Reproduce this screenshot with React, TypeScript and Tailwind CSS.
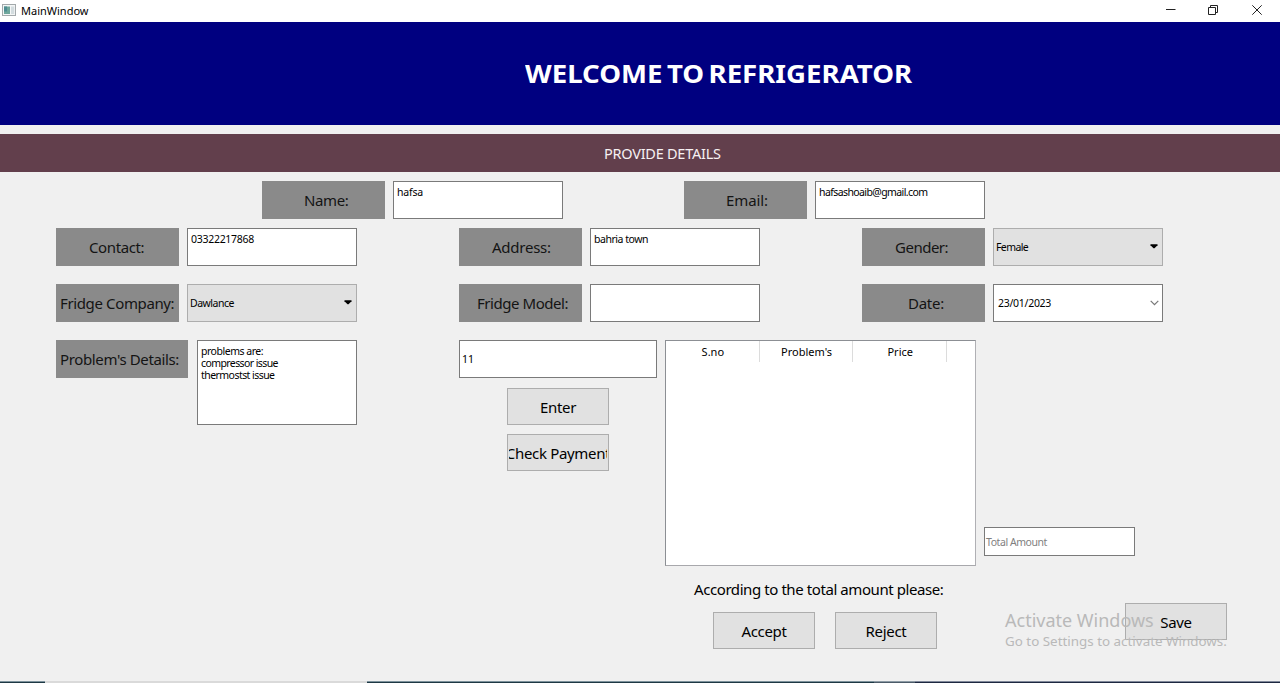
import React from "react";

function Label({ text, className }: { text: string; className: string }) {
  return (
    <div className={`flex h-[38px] shrink-0 items-center bg-[#8a8a8a] text-[15px] text-[#141414] ${className}`}>
      <span className="mt-px whitespace-nowrap">{text}</span>
    </div>
  );
}

function Field({ text, className }: { text: string; className: string }) {
  return (
    <div className={`h-[38px] w-[170px] shrink-0 border border-[#7a7a7a] bg-white px-[3px] py-1 text-[10.5px] leading-[12px] text-black ${className}`}>
      <span className="block whitespace-nowrap">{text}</span>
    </div>
  );
}

function Combo({ text, className }: { text: string; className: string }) {
  return (
    <div className={`flex h-[38px] w-[170px] shrink-0 items-center justify-between border border-[#adadad] bg-[#e1e1e1] pr-1 pl-[2px] text-[10.5px] text-black ${className}`}>
      <span className="mt-px whitespace-nowrap">{text}</span>
      <svg width="8" height="5" viewBox="0 0 8 5" className="mb-px">
        <path d="M0.5 0.3H7.5V1.2L4.5 4.3H3.5L0.5 1.2Z" fill="#000" />
      </svg>
    </div>
  );
}

function Button({ text, className }: { text: string; className?: string }) {
  return (
    <button className={`flex h-[37px] w-[102px] shrink-0 items-center border border-[#adadad] bg-[#e1e1e1] px-px text-[15px] tracking-[-0.32px] text-black ${className ?? ""}`}>
      <span className="mt-px flex w-full justify-center overflow-hidden whitespace-nowrap">{text}</span>
    </button>
  );
}

function TitleBar() {
  return (
    <header className="flex h-[22px] shrink-0 items-center bg-white pl-[2px]">
      <svg width="14" height="12" viewBox="0 0 14 12" className="-mt-[3px]">
        <rect x="0.5" y="0.5" width="13" height="11" fill="#f4f6f6" stroke="#a3a9ab" />
        <rect x="2" y="2.5" width="6" height="7.5" fill="#6fa79c" />
        <rect x="2" y="2.5" width="3" height="5" fill="#4f8d92" />
        <rect x="9" y="2.5" width="3.2" height="7.5" fill="#d3dcdf" />
      </svg>
      <span className="ml-[5px] text-[11px] leading-[22px] text-black">MainWindow</span>
      <div className="ml-auto flex items-center pr-[18px]">
        <svg width="10" height="11" viewBox="0 0 10 11" className="mr-[32px] -mt-[3px]">
          <path d="M0 5.5H9.5" stroke="#222" fill="none" />
        </svg>
        <svg width="10" height="10" viewBox="0 0 10 10" className="mr-[34px] -mt-[3px]">
          <path d="M0.5 2.5H7.5V9.5H0.5ZM2.5 2.5V0.5H9.5V7.5H7.5" stroke="#222" fill="none" />
        </svg>
        <svg width="10" height="10" viewBox="0 0 10 10" className="-mt-[3px]">
          <path d="M0.3 0.3L9.7 9.7M9.7 0.3L0.3 9.7" stroke="#222" fill="none" />
        </svg>
      </div>
    </header>
  );
}

function HeaderCell({ text }: { text: string }) {
  return (
    <div className="flex h-[21px] w-[93.7px] items-center justify-center border-r border-[#dcdcdc] text-[11px] text-black">
      <span className="mt-px ml-px">{text}</span>
    </div>
  );
}

export default function App() {
  return (
    <div className="relative flex h-[683px] w-[1280px] flex-col overflow-hidden bg-[#f0f0f0] font-['Noto_Sans','DejaVu_Sans',sans-serif]">
      <TitleBar />
      <div className="flex h-[103px] shrink-0 items-center bg-[#000080] pl-[525px] text-[25px] font-bold text-white">
        <span className="origin-left scale-x-[1.104] [word-spacing:-2.5px]">WELCOME TO REFRIGERATOR</span>
      </div>
      <div className="mt-[9px] flex h-[38px] shrink-0 items-center bg-[#623f4c] pl-[604px] text-[14.5px] tracking-[-0.25px] text-[#f6f0f2]">
        <span className="mt-[2px]">PROVIDE DETAILS</span>
      </div>

      <div className="mt-[9px] flex shrink-0 pl-[262px]">
        <Label text="Name:" className="w-[123px] pl-[42px] tracking-[-0.4px]" />
        <Field text="hafsa" className="ml-2 tracking-[-0.2px]" />
        <Label text="Email:" className="ml-[121px] w-[123px] pl-[42px] tracking-[-0.1px]" />
        <Field text="hafsashoaib@gmail.com" className="ml-2 tracking-[-0.59px]" />
      </div>

      <div className="mt-[9px] flex shrink-0 pl-[56px]">
        <Label text="Contact:" className="w-[123px] pl-[33px] tracking-[-0.4px]" />
        <Field text="03322217868" className="ml-2 tracking-[-0.28px]" />
        <Label text="Address:" className="ml-[102px] w-[123px] pl-[33px] tracking-[-0.25px]" />
        <Field text="bahria town" className="ml-2 tracking-[-0.47px]" />
        <Label text="Gender:" className="ml-[102px] w-[123px] pl-[33px] tracking-[-0.5px]" />
        <Combo text="Female" className="ml-2 tracking-[-0.6px]" />
      </div>

      <div className="mt-[18px] flex shrink-0 pl-[56px]">
        <Label text="Fridge Company:" className="w-[123px] pl-1 tracking-[-0.37px]" />
        <Combo text="Dawlance" className="ml-2 tracking-[-0.48px]" />
        <Label text="Fridge Model:" className="ml-[102px] w-[123px] pl-[18px] tracking-[-0.45px]" />
        <Field text="" className="ml-2" />
        <Label text="Date:" className="ml-[102px] w-[123px] pl-[46px] tracking-[-0.25px]" />
        <div className="ml-2 flex h-[38px] w-[170px] shrink-0 items-center justify-between border border-[#7a7a7a] bg-white pr-[3px] pl-1 text-[10.5px] tracking-[-0.28px] text-black">
          <span className="mt-[2px]">23/01/2023</span>
          <svg width="9" height="6" viewBox="0 0 9 6">
            <path d="M0.7 0.8L4.5 4.6L8.3 0.8" stroke="#777" strokeWidth="1.2" fill="none" />
          </svg>
        </div>
      </div>

      <div className="mt-[18px] flex h-[226px] shrink-0 items-start pl-[56px]">
        <Label text="Problem's Details:" className="w-[132px] pl-1 tracking-[-0.37px]" />
        <div className="ml-[9px] h-[85px] w-[160px] shrink-0 border border-[#7a7a7a] bg-white px-[3px] py-1 text-[10.5px] leading-[12px] text-black">
          <p className="tracking-[-0.48px]">problems are:</p>
          <p className="tracking-[-0.59px]">compressor issue</p>
          <p className="tracking-[-0.55px]">thermostst issue</p>
        </div>
        <div className="ml-[102px] flex w-[198px] shrink-0 flex-col items-center">
          <div className="flex h-[38px] w-full items-center border border-[#7a7a7a] bg-white pl-[2px] text-[10.5px] text-black">
            <span className="mt-[2px]">11</span>
          </div>
          <Button text="Enter" className="mt-[10px]" />
          <Button text="Check Payment" className="mt-[9px]" />
        </div>
        <div className="ml-2 h-[226px] w-[311px] shrink-0 border border-[#8c8f94] border-r-[#b0b0b4] border-b-[#a8a8ac] bg-white">
          <div className="flex">
            <HeaderCell text="S.no" />
            <HeaderCell text="Problem's" />
            <HeaderCell text="Price" />
          </div>
        </div>
        <div className="mb-[10px] ml-2 flex h-[29px] w-[151px] shrink-0 items-center self-end border border-[#7a7a7a] bg-white pl-px text-[10.5px] tracking-[-0.44px] text-[#7f7f7f]">
          <span className="mt-[2px]">Total Amount</span>
        </div>
      </div>

      <div className="flex h-[115px] shrink-0">
        <div className="ml-[694px] flex w-[420px] flex-col">
          <p className="mt-[11px] text-[15px] leading-[24px] tracking-[-0.42px] whitespace-nowrap text-black">
            According to the total amount please:
          </p>
          <div className="mt-[11px] ml-[19px] flex gap-5">
            <Button text="Accept" />
            <Button text="Reject" />
          </div>
        </div>
        <Button text="Save" className="mt-[37px] ml-[11px]" />
      </div>

      <div className="mt-auto flex h-[2px] shrink-0">
        <div className="w-[45px] border-t border-[#7d929c] bg-[#1d3844]" />
        <div className="w-[322px] bg-[#dadada]" />
        <div className="w-[507px] border-t border-[#7d929c] bg-[#1d3844]" />
        <div className="w-[41px] border-t border-[#8d9ba5] bg-[#4b5a68]" />
        <div className="flex-1 border-t border-[#80889a] bg-[#1c2740]" />
      </div>

      <div className="pointer-events-none absolute top-[608px] left-[1005px] whitespace-nowrap text-[#b9b9b9]">
        <p className="text-[18px] leading-[24px]">Activate Windows</p>
        <p className="text-[13.4px] leading-[18px]">Go to Settings to activate Windows.</p>
      </div>
    </div>
  );
}
